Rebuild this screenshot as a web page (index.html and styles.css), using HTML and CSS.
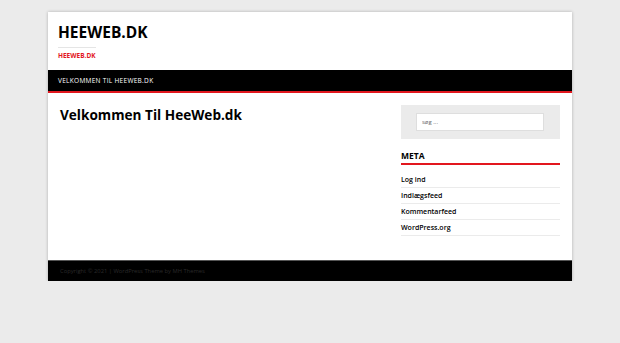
FILE: index.html
```html
<!DOCTYPE html>
<html lang="da">
<head>
    <meta charset="UTF-8">
    <meta name="viewport" content="width=device-width, initial-scale=1.0">
    <title>HEEWEB.DK</title>
    <link rel="stylesheet" href="styles.css">
</head>
<body>

    <div class="wrapper">
        <!-- Header -->
        <header class="site-header">
            <div class="site-title">HEEWEB.DK</div>
            <div class="site-desc">HEEWEB.DK</div>
        </header>

        <!-- Menu -->
        <nav class="main-nav">
            <a href="#">Velkommen til HeeWeb.dk</a>
        </nav>

        <div class="site-content">
            <main class="main-col">
                <h1 class="page-title">Velkommen Til HeeWeb.dk</h1>
            </main>

            <aside class="sidebar">
                <div class="search-box">
                    <input type="text" placeholder="søg ...">
                </div>

                <h4 class="widget-title">META</h4>
                <ul class="widget-list">
                    <li><a href="#">Log ind</a></li>
                    <li><a href="#">Indlægsfeed</a></li>
                    <li><a href="#">Kommentarfeed</a></li>
                    <li><a href="#">WordPress.org</a></li>
                </ul>
            </aside>
        </div>

        <footer class="site-footer">
            Copyright © 2021 | WordPress Theme by MH Themes
        </footer>
    </div>

</body>
</html>
```

FILE: styles.css
```css
body {
    margin: 0;
    padding: 12px 0 0;
    background-color: #ebebeb;
    font-family: "Open Sans", Arial, sans-serif;
    color: #000;
}

.wrapper {
    width: 524px;
    margin: 0 auto;
    background-color: #fff;
    box-shadow: 0 0 3px rgba(0, 0, 0, 0.25);
}

/* Шапка */
.site-header {
    height: 58px;
    padding: 11px 10px 0;
    box-sizing: border-box;
}

.site-title {
    font-size: 15.5px;
    font-weight: 700;
    line-height: 18px;
}

.site-desc {
    display: inline-block;
    margin-top: 3px;
    padding-top: 3px;
    border-top: 1px solid #e5e5e5;
    color: #e2171e;
    font-size: 6.5px;
    font-weight: 700;
    line-height: 9px;
}

/* Меню */
.main-nav {
    height: 21px;
    background-color: #000;
    border-bottom: 2px solid #e2171e;
    padding: 0 10px;
    display: flex;
    align-items: center;
}

.main-nav a {
    color: #fff;
    font-size: 6.5px;
    text-transform: uppercase;
    text-decoration: none;
    letter-spacing: 0.3px;
}

/* Контент */
.site-content {
    display: flex;
    padding: 12px 12px 24px;
    min-height: 130px;
}

.main-col {
    flex: 1;
}

.page-title {
    margin: 0;
    font-size: 13.6px;
    font-weight: 700;
    line-height: 20px;
}

.sidebar {
    width: 159px;
}

.search-box {
    background-color: #ebebeb;
    padding: 8px 16px 8px 15px;
}

.search-box input {
    display: block;
    width: 100%;
    height: 18px;
    box-sizing: border-box;
    border: 1px solid #dedede;
    padding: 0 5px;
    font-family: "Open Sans", Arial, sans-serif;
    font-size: 6px;
    color: #666;
    outline: none;
}

.search-box input::placeholder {
    color: #666;
}

.widget-title {
    margin: 12px 0 0;
    padding-bottom: 2px;
    border-bottom: 2px solid #e2171e;
    font-size: 8.5px;
    font-weight: 700;
    line-height: 10px;
}

.widget-list {
    list-style: none;
    margin: 7px 0 0;
    padding: 0;
}

.widget-list li {
    height: 16px;
    box-sizing: border-box;
    border-bottom: 1px solid #ebebeb;
    padding-bottom: 1px;
    display: flex;
    align-items: center;
}

.widget-list a {
    color: #000;
    font-size: 7px;
    font-weight: 600;
    text-decoration: none;
}

/* Подвал */
.site-footer {
    height: 20px;
    background-color: #000;
    border-top: 1px solid #555;
    padding: 0 12px;
    display: flex;
    align-items: center;
    color: #2a2a2a;
    font-size: 5.8px;
}
```
